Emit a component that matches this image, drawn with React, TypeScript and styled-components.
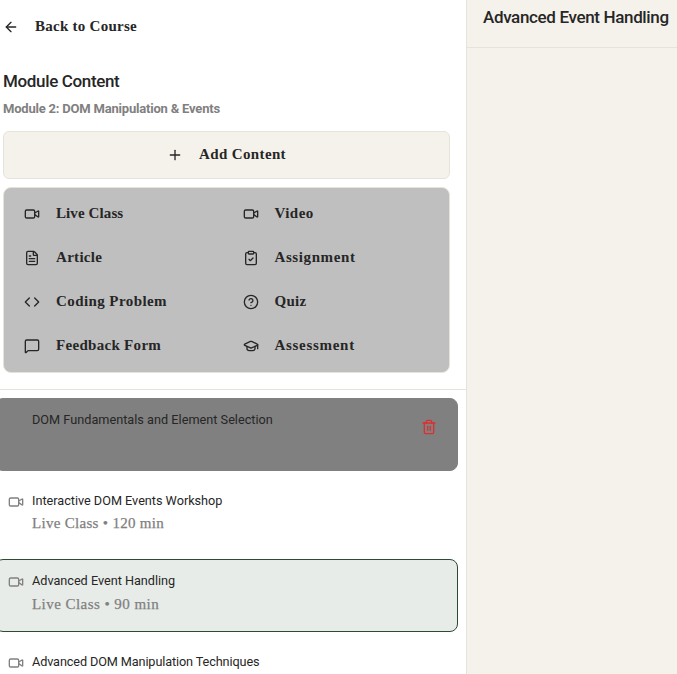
import React from 'react';
import styled, { createGlobalStyle } from 'styled-components';
import {
  ArrowLeft,
  ClipboardCheck,
  Code,
  CircleHelp,
  FileText,
  GraduationCap,
  LucideIcon,
  MessageSquare,
  Plus,
  Trash2,
  Video,
} from 'lucide-react';

const ink = '#262626';
const muted = '#808080';
const line = '#e6e4da';
const cream = '#f5f2eb';
const sans = 'Roboto, sans-serif';

const GlobalStyle = createGlobalStyle`
  *, *::before, *::after { box-sizing: border-box; }
  body { margin: 0; background: #fff; color: ${ink}; overflow: hidden; }
  button { font: inherit; color: inherit; border: 0; background: none; padding: 0; margin: 0; text-align: left; }
  h1, h2, h3, p { margin: 0; }
  svg { flex: none; display: block; }
`;

const Page = styled.div`
  display: flex;
  width: 677px;
  height: 674px;
  overflow: hidden;
`;

const Sidebar = styled.aside`
  flex: none;
  width: 467px;
  display: flex;
  flex-direction: column;
  background: #fff;
  border-right: 1px solid ${line};
`;

const SidebarHeader = styled.header`
  flex: none;
  height: 390px;
  padding: 10px 16px 0 3px;
  border-bottom: 1px solid ${line};
`;

const SerifLabel = styled.span<{ $tracking: number }>`
  padding-bottom: 2px;
  font: 700 15px/24px 'Liberation Serif', serif;
  letter-spacing: ${(p) => p.$tracking}px;
  white-space: nowrap;
`;

const BackButton = styled.button`
  display: flex;
  align-items: center;
  gap: 16px;
  height: 33px;
`;

const Title = styled.h1`
  margin-top: 26px;
  font: 500 17px/24px ${sans};
  letter-spacing: -0.35px;
`;

const Subtitle = styled.p`
  margin-top: 6px;
  font: 700 13px/20px ${sans};
  letter-spacing: -0.2px;
  color: ${muted};
`;

const AddButton = styled.button`
  display: flex;
  align-items: center;
  justify-content: center;
  gap: 16px;
  width: 447px;
  height: 48px;
  margin-top: 12px;
  background: ${cream};
  border: 1px solid ${line};
  border-radius: 6px;
`;

const TypeMenu = styled.div`
  display: grid;
  grid-template-columns: 1fr 1fr;
  grid-auto-rows: 44px;
  width: 447px;
  margin-top: 8px;
  padding: 4px;
  background: #bfbfbf;
  border: 1px solid ${line};
  border-radius: 8px;
`;

const TypeOption = styled.button`
  display: flex;
  align-items: center;
  gap: 16px;
  padding-left: 16px;
`;

const ContentList = styled.div`
  flex: 1;
  min-height: 0;
  display: flex;
  flex-direction: column;
  gap: 8px;
  margin-left: -5px;
  padding: 8px 8px 0 0;
  overflow: hidden;
`;

const cardTone = {
  plain: { background: 'transparent', border: 'transparent' },
  dimmed: { background: '#808080', border: '#808080' },
  selected: { background: '#e8ece8', border: '#2d4a32' },
};

const Card = styled.article<{ $tone: keyof typeof cardTone }>`
  flex: none;
  display: flex;
  align-items: flex-start;
  height: 72.67px;
  padding: 11px 20px 0 12px;
  border: 1px solid ${(p) => cardTone[p.$tone].border};
  border-radius: 8px;
  background: ${(p) => cardTone[p.$tone].background};
`;

const CardIcon = styled.div`
  width: 24px;
  padding-top: 3px;
  color: ${muted};
`;

const CardBody = styled.div`
  flex: 1;
`;

const CardTitle = styled.h3<{ $tracking: number }>`
  font: 400 12.7px/20px ${sans};
  letter-spacing: ${(p) => p.$tracking}px;
  white-space: nowrap;
`;

const CardMeta = styled.p<{ $tracking: number }>`
  margin-top: 0.5px;
  font: 400 15px/24px 'Liberation Serif', serif;
  letter-spacing: ${(p) => p.$tracking}px;
  color: ${muted};
  -webkit-text-stroke: 0.25px ${muted};
`;

const DeleteButton = styled.button`
  margin-top: 9px;
  color: #dc2f2f;
`;

const Detail = styled.main`
  flex: 1;
  min-width: 0;
  background: ${cream};
`;

const DetailHeader = styled.header`
  height: 48px;
  padding: 5px 0 0 16px;
  border-bottom: 1px solid ${line};
`;

const DetailTitle = styled.h2`
  font: 500 17px/24px ${sans};
  letter-spacing: -0.35px;
  white-space: nowrap;
`;

const contentTypes: { icon: LucideIcon; label: string; tracking: number }[] = [
  { icon: Video, label: 'Live Class', tracking: 0.1 },
  { icon: Video, label: 'Video', tracking: 0.45 },
  { icon: FileText, label: 'Article', tracking: 0.3 },
  { icon: ClipboardCheck, label: 'Assignment', tracking: 0.6 },
  { icon: Code, label: 'Coding Problem', tracking: 0.42 },
  { icon: CircleHelp, label: 'Quiz', tracking: 0.25 },
  { icon: MessageSquare, label: 'Feedback Form', tracking: 0.3 },
  { icon: GraduationCap, label: 'Assessment', tracking: 0.7 },
];

type Item = {
  title: string;
  titleTracking: number;
  meta?: string;
  metaTracking?: number;
  tone: keyof typeof cardTone;
};

const items: Item[] = [
  { title: 'DOM Fundamentals and Element Selection', titleTracking: 0.01, tone: 'dimmed' },
  {
    title: 'Interactive DOM Events Workshop',
    titleTracking: -0.02,
    meta: 'Live Class • 120 min',
    metaTracking: 0.3,
    tone: 'plain',
  },
  {
    title: 'Advanced Event Handling',
    titleTracking: -0.02,
    meta: 'Live Class • 90 min',
    metaTracking: 0.45,
    tone: 'selected',
  },
  { title: 'Advanced DOM Manipulation Techniques', titleTracking: -0.12, tone: 'plain' },
];

export default function App() {
  return (
    <Page>
      <GlobalStyle />
      <Sidebar>
        <SidebarHeader>
          <BackButton>
            <ArrowLeft size={16} />
            <SerifLabel $tracking={0.26}>Back to Course</SerifLabel>
          </BackButton>
          <Title>Module Content</Title>
          <Subtitle>Module 2: DOM Manipulation &amp; Events</Subtitle>
          <AddButton>
            <Plus size={16} />
            <SerifLabel $tracking={0.37}>Add Content</SerifLabel>
          </AddButton>
          <TypeMenu>
            {contentTypes.map(({ icon: Icon, label, tracking }) => (
              <TypeOption key={label}>
                <Icon size={16} />
                <SerifLabel $tracking={tracking}>{label}</SerifLabel>
              </TypeOption>
            ))}
          </TypeMenu>
        </SidebarHeader>
        <ContentList>
          {items.map((item) => (
            <Card key={item.title} $tone={item.tone}>
              <CardIcon>{item.tone !== 'dimmed' && <Video size={16} />}</CardIcon>
              <CardBody>
                <CardTitle $tracking={item.titleTracking}>{item.title}</CardTitle>
                {item.meta && <CardMeta $tracking={item.metaTracking ?? 0}>{item.meta}</CardMeta>}
              </CardBody>
              {item.tone === 'dimmed' && (
                <DeleteButton aria-label="Delete">
                  <Trash2 size={16} />
                </DeleteButton>
              )}
            </Card>
          ))}
        </ContentList>
      </Sidebar>
      <Detail>
        <DetailHeader>
          <DetailTitle>Advanced Event Handling</DetailTitle>
        </DetailHeader>
      </Detail>
    </Page>
  );
}
